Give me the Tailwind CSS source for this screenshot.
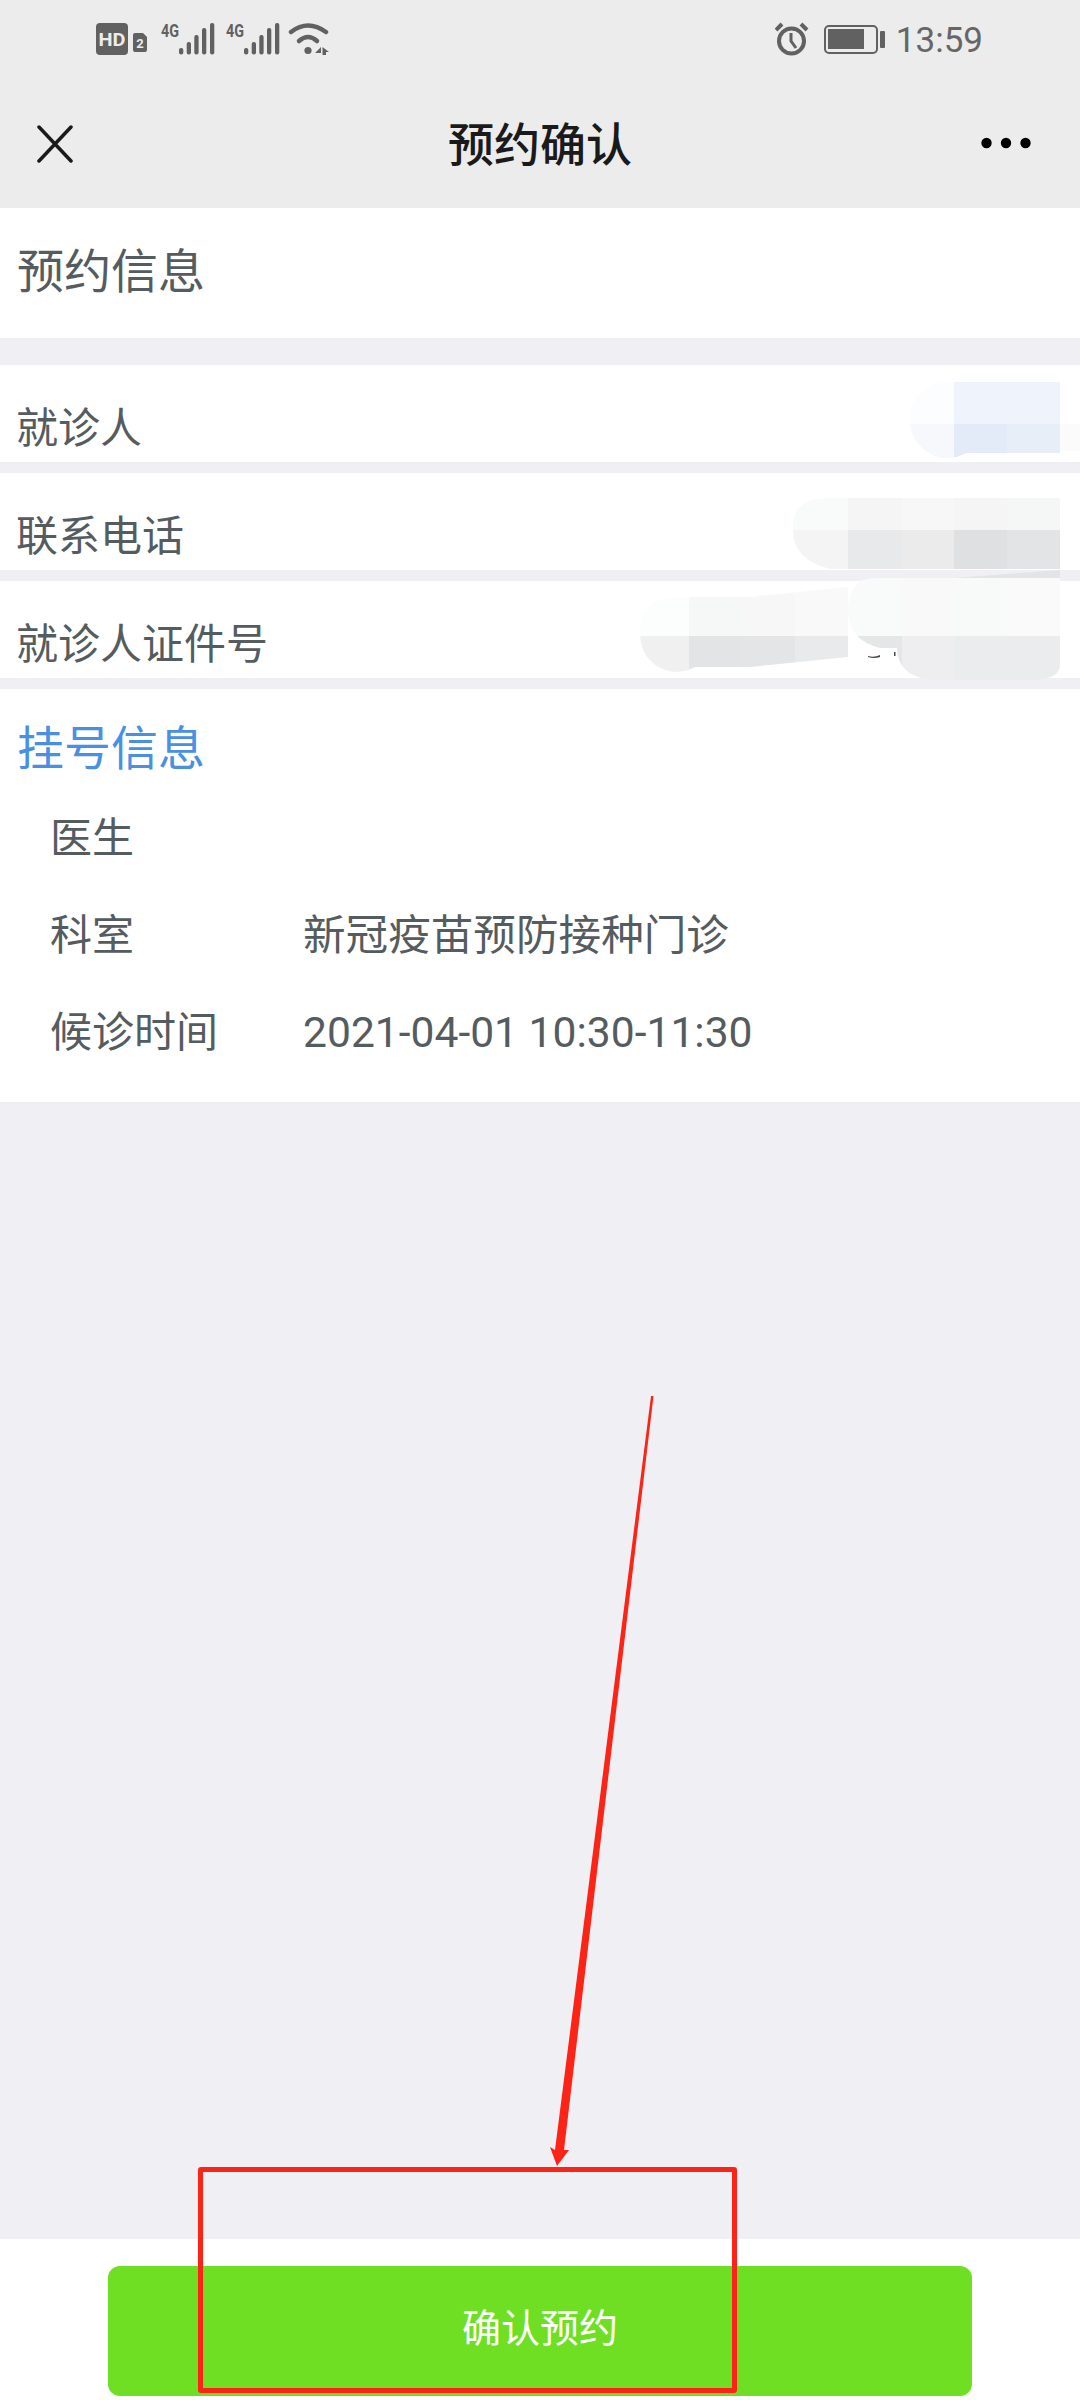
<!DOCTYPE html>
<html lang="zh-CN">
<head>
  <meta charset="UTF-8" />
  <meta name="viewport" content="width=device-width, initial-scale=1" />
  <title>预约确认</title>
  <script src="https://cdn.jsdelivr.net/npm/@tailwindcss/browser@4"></script>
</head>
<body class="bg-[#efeff4]">
  <div class="relative flex flex-col w-[1080px] h-[2400px] overflow-hidden bg-[#efeff4] text-[#555c5f] font-[family-name:Roboto,'Noto_Sans_CJK_SC',sans-serif]">

    <!-- status bar + title bar -->
    <header class="h-[208px] shrink-0 bg-[#ececec]">
      <div class="h-[84px] flex justify-between pl-[96px] pr-[97px] pt-[20px]">
        <svg class="w-[235px] h-[40px]" viewBox="96 20 235 40" fill="#616161">
          <rect x="96" y="23" width="32" height="32" rx="4" />
          <text x="112" y="46" text-anchor="middle" fill="#ececec" font-size="19" font-weight="700" textLength="27" lengthAdjust="spacingAndGlyphs">HD</text>
          <path d="M135 33h8l4 4v13a2 2 0 0 1-2 2h-10a2 2 0 0 1-2-2v-15a2 2 0 0 1 2-2z" />
          <text x="140" y="48" text-anchor="middle" fill="#ececec" font-size="13" font-weight="700">2</text>
          <text x="161" y="37" font-size="18" font-weight="700" textLength="18" lengthAdjust="spacingAndGlyphs">4G</text>
          <rect x="179" y="48" width="4.3" height="6.5" rx="2" />
          <rect x="186.7" y="42" width="4.3" height="12.5" rx="2" />
          <rect x="194.3" y="35" width="4.3" height="19.5" rx="2" />
          <rect x="202" y="28" width="4.3" height="26.5" rx="2" />
          <rect x="210" y="23" width="4.3" height="31.5" rx="2" />
          <text x="226" y="37" font-size="18" font-weight="700" textLength="18" lengthAdjust="spacingAndGlyphs">4G</text>
          <rect x="244" y="48" width="4.3" height="6.5" rx="2" />
          <rect x="251.7" y="42" width="4.3" height="12.5" rx="2" />
          <rect x="259.3" y="35" width="4.3" height="19.5" rx="2" />
          <rect x="267" y="28" width="4.3" height="26.5" rx="2" />
          <rect x="275" y="23" width="4.3" height="31.5" rx="2" />
          <path d="M291 32Q308 19 326 32" fill="none" stroke="#616161" stroke-width="4.500" stroke-linecap="round" />
          <path d="M299 41Q308 33 317 41" fill="none" stroke="#616161" stroke-width="4.500" stroke-linecap="round" />
          <circle cx="308" cy="50.500" r="3.600" />
          <path d="M315 53l6-6v6zM322.500 47l6.500 5h-3v3h-3.500z" />
        </svg>
        <div class="flex items-start">
          <svg class="w-[112px] h-[40px]" viewBox="775 20 112 40" fill="none" stroke="#616161">
            <circle cx="791.5" cy="41" r="12.5" stroke-width="4" />
            <path d="M791 33v8l5 7" stroke-width="3" />
            <path d="M776 30l6-6M801 24l6 6" stroke-width="4" />
            <rect x="825" y="26" width="52" height="27" rx="4" stroke-width="2" />
            <rect x="828" y="29" width="36" height="20" fill="#616161" stroke="none" />
            <rect x="880" y="31" width="5" height="17" rx="1" fill="#616161" stroke="none" />
          </svg>
          <span class="ml-[9px] pt-[1px] text-[35px] leading-[40px] text-[#666666]">13:59</span>
        </div>
      </div>
      <div class="h-[124px] grid grid-cols-[1fr_auto_1fr] items-center px-[37px]">
        <svg class="w-[36px] h-[38px] mb-[5px]" viewBox="0 0 36 38" fill="none" stroke="#1a1a1a" stroke-width="3.5" stroke-linecap="round">
          <path d="M2 2l32 34M34 2L2 36" />
        </svg>
        <h1 class="mb-[3px] text-[46px] leading-none font-medium text-[#1a1a1a]">预约确认</h1>
        <svg class="w-[50px] h-[12px] mr-[12px] mb-[7px] justify-self-end" viewBox="0 0 50 12" fill="#000000">
          <circle cx="5.5" cy="6" r="5.2" />
          <circle cx="25" cy="6" r="5.2" />
          <circle cx="44.5" cy="6" r="5.2" />
        </svg>
      </div>
    </header>

    <section class="h-[130px] shrink-0 bg-white pl-[17px] pt-[40px]">
      <h2 class="text-[47px] leading-none">预约信息</h2>
    </section>

    <!-- patient rows -->
    <div class="mt-[27px] flex flex-col gap-[11px]">
      <div class="h-[97px] bg-white pl-[16px] pt-[43px] text-[42px] leading-none">就诊人</div>
      <div class="h-[97px] bg-white pl-[16px] pt-[43px] text-[42px] leading-none">联系电话</div>
      <div class="h-[97px] bg-white pl-[16px] pt-[43px] text-[42px] leading-none">就诊人证件号</div>
    </div>

    <section class="mt-[11px] h-[413px] shrink-0 bg-white pt-[36px]">
      <h2 class="pl-[17px] text-[47px] leading-none text-[#4a90e2]">挂号信息</h2>
      <dl class="mt-[18px] pl-[50px] grid grid-cols-[253px_1fr] auto-rows-[97px] items-center text-[42px] leading-none">
        <dt>医生</dt>
        <dd></dd>
        <dt>科室</dt>
        <dd class="text-[42.6px]">新冠疫苗预防接种门诊</dd>
        <dt>候诊时间</dt>
        <dd class="text-[42.6px]">2021-04-01 10:30-11:30</dd>
      </dl>
    </section>

    <footer class="mt-auto h-[161px] shrink-0 bg-white px-[108px] pt-[27px]">
      <button class="w-full h-[130px] pb-[4px] rounded-[12px] bg-[#6fdf23] text-white text-[39px]">确认预约</button>
    </footer>

    <!-- mosaic masks and red arrow drawn on top of the screenshot -->
    <svg class="absolute inset-0 w-[1080px] h-[2400px] pointer-events-none" viewBox="0 0 1080 2400">
      <defs>
        <clipPath id="m1"><path d="M954 382H1060V453H966Q950 462 935 456Q910 445 910 420Q910 392 935 384Q945 382 954 382Z" /></clipPath>
        <clipPath id="m2"><path d="M860 498H1060V569H830Q793 560 793 530V525Q793 498 830 498Z" /></clipPath>
        <clipPath id="m3"><path d="M689 597H750L848 587V657L750 667H695Q680 675 665 670Q640 660 640 632Q640 605 665 598Q680 597 689 597Z" /></clipPath>
        <clipPath id="m4"><path d="M862 580Q870 578 880 578H1060V665Q1060 680 1030 680H930Q897 675 897 648H880Q848 640 848 610Q848 590 862 580Z" /></clipPath>
      </defs>

      <rect x="1060" y="424" width="20" height="27" fill="#fbfbfb" />
      <g clip-path="url(#m1)">
        <rect x="900" y="380" width="54" height="44" fill="#fcfdfe" />
        <rect x="954" y="380" width="106" height="44" fill="#eff4fc" />
        <rect x="900" y="424" width="54" height="40" fill="#f7f8fc" />
        <rect x="954" y="424" width="53" height="40" fill="#e3ebf8" />
        <rect x="1007" y="424" width="53" height="40" fill="#e7eef8" />
      </g>

      <path d="M954 578L1007 574L1060 570V583H954Z" fill="#e3e4e6" />
      <g clip-path="url(#m2)">
        <rect x="790" y="498" width="58" height="32" fill="#f9fafa" />
        <rect x="848" y="498" width="54" height="32" fill="#f5f5f5" />
        <rect x="902" y="498" width="52" height="32" fill="#f7f7f7" />
        <rect x="954" y="498" width="53" height="32" fill="#f5f5f5" />
        <rect x="1007" y="498" width="53" height="32" fill="#f5f6f6" />
        <rect x="790" y="530" width="58" height="40" fill="#f4f4f4" />
        <rect x="848" y="530" width="54" height="40" fill="#e8e9ea" />
        <rect x="902" y="530" width="52" height="40" fill="#ebebec" />
        <rect x="954" y="530" width="53" height="40" fill="#dfe0e2" />
        <rect x="1007" y="530" width="53" height="40" fill="#e3e4e6" />
      </g>

      <g clip-path="url(#m3)">
        <rect x="635" y="585" width="54" height="51" fill="#fcfdfd" />
        <rect x="689" y="585" width="53" height="51" fill="#f6f7f7" />
        <rect x="742" y="585" width="53" height="51" fill="#f7f7f7" />
        <rect x="795" y="585" width="53" height="51" fill="#f9f9f9" />
        <rect x="635" y="636" width="54" height="40" fill="#f0f0f1" />
        <rect x="689" y="636" width="53" height="40" fill="#e3e4e5" />
        <rect x="742" y="636" width="53" height="40" fill="#e4e5e7" />
        <rect x="795" y="636" width="53" height="40" fill="#e9eaeb" />
      </g>
      <path d="M868 656Q874 658 880 655L880 657Q874 659 868 657ZM894 652h1.500v4h-1.500z" fill="#444b4e" />
      <g clip-path="url(#m4)">
        <rect x="845" y="576" width="57" height="60" fill="#f9fafa" />
        <rect x="902" y="576" width="52" height="60" fill="#f9f9f9" />
        <rect x="954" y="576" width="53" height="60" fill="#f8f9f9" />
        <rect x="1007" y="576" width="53" height="60" fill="#fafafa" />
        <rect x="845" y="636" width="57" height="46" fill="#e5e6e7" />
        <rect x="902" y="636" width="52" height="46" fill="#eeeef0" />
        <rect x="954" y="636" width="106" height="46" fill="#ebecee" />
      </g>

      <polygon points="651,1396 653.500,1396 564,2150 569,2150 557,2166 550,2147 555,2150" fill="#fb2416" />
    </svg>

    <!-- red highlight box -->
    <div class="absolute left-[198px] top-[2167px] w-[539px] h-[226px] border-[5px] border-[#fb2416] rounded-[3px]"></div>
  </div>
</body>
</html>
